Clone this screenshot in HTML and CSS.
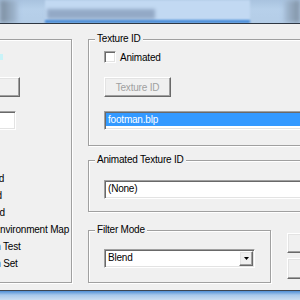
FILE: index.html
```html
<!DOCTYPE html>
<html lang="en">
<head>
    <meta charset="UTF-8">
    <title>Layer</title>
    <link rel="stylesheet" href="styles.css">
</head>
<body>
    <div class="titlebar">
        <div class="glass-left"></div>
        <div class="glass-title">
            <div class="glass-caption"></div>
            <div class="glass-strip"></div>
        </div>
        <div class="glass-right"></div>
    </div>

    <div class="client">
        <!-- left group, mostly scrolled off the left edge -->
        <fieldset class="group group-alpha">
            <legend>Alpha</legend>
            <div class="group-body">
                <div class="check-row">
                    <span class="check"></span>
                    <span class="focus-mark"></span>
                </div>
                <button class="btn" type="button">Alpha</button>
                <div class="edit edit-short">1.000</div>
                <div class="flags">
                    <div class="flag"><span class="check"></span><label>Unshaded</label></div>
                    <div class="flag"><span class="check"></span><label>Unfogged</label></div>
                    <div class="flag"><span class="check"></span><label>Two Sided</label></div>
                    <div class="flag"><span class="check"></span><label>Sphere Environment Map</label></div>
                    <div class="flag"><span class="check"></span><label>No Depth Test</label></div>
                    <div class="flag"><span class="check"></span><label>No Depth Set</label></div>
                </div>
            </div>
        </fieldset>

        <div class="mid">
            <fieldset class="group group-texture">
                <legend>Texture ID</legend>
                <div class="group-body">
                    <div class="check-row">
                        <span class="check"></span>
                        <label>Animated</label>
                    </div>
                    <button class="btn" type="button" disabled>Texture ID</button>
                    <div class="edit edit-long"><span class="selected">footman.blp</span></div>
                </div>
            </fieldset>

            <fieldset class="group group-anim">
                <legend>Animated Texture ID</legend>
                <div class="group-body">
                    <div class="edit edit-long"><span class="plain">(None)</span></div>
                </div>
            </fieldset>

            <div class="filter-row">
                <fieldset class="group group-filter">
                    <legend>Filter Mode</legend>
                    <div class="group-body">
                        <div class="edit combo">
                            <span class="plain">Blend</span>
                            <span class="combo-btn">
                                <svg width="5" height="3" viewBox="0 0 5 3"><polygon points="0,0 5,0 2.5,3" fill="#000"/></svg>
                            </span>
                        </div>
                    </div>
                </fieldset>
                <div class="side-btns">
                    <button class="btn" type="button">OK</button>
                    <button class="btn" type="button">Cancel</button>
                </div>
            </div>
        </div>
    </div>

    <div class="taskbar"></div>
</body>
</html>
```

FILE: styles.css
```css
* {
    box-sizing: border-box;
}
body {
    margin: 0;
    width: 300px;
    height: 300px;
    overflow: hidden;
    background-color: #f0f0f0;
    font-family: "Liberation Sans", Arial, sans-serif;
    font-size: 10px;
    letter-spacing: -0.2px;
    color: #000;
}

/* blurred aero title bar */
.titlebar {
    display: flex;
    height: 24px;
    border-bottom: 1px solid #2e3742;
    background: linear-gradient(#a9c3df, #b7d0ea 40%, #b4cde7);
    overflow: hidden;
}
.glass-left {
    width: 18px;
    background: linear-gradient(to right, #7a8b9d, #a6bed8);
    filter: blur(2px);
}
.glass-title {
    display: flex;
    flex-direction: column;
    margin-left: 27px;
    width: 205px;
    background-color: #c2d9f2;
    filter: blur(1px);
}
.glass-caption {
    margin-top: 9px;
    margin-left: 2px;
    width: 108px;
    height: 10px;
    background-color: #93a9c6;
    filter: blur(1.5px);
}
.glass-strip {
    margin-top: auto;
    height: 3px;
    background-color: #3f87d8;
}
.glass-right {
    margin-left: auto;
    width: 16px;
    background: linear-gradient(to right, #a6bed8, #7f90a2);
    filter: blur(2px);
}

.client {
    display: flex;
    align-items: flex-start;
    height: 266px;
}

/* etched group boxes */
.group {
    margin: 0;
    padding: 0;
    border: 1px solid #a0a0a0;
    box-shadow: 1px 1px 0 #fff, inset 1px 1px 0 #fff;
    min-width: 0;
}
.group legend {
    margin-left: 6px;
    padding: 0 2px;
    height: 12px;
    line-height: 12px;
    background-color: #f0f0f0;
}
.group-body {
    padding: 6px 0 0 15px;
}

.group-alpha {
    flex: none;
    margin-left: -63px;
    margin-top: 9px;
    width: 135px;
    height: 250px;
}
.mid {
    flex: none;
    display: flex;
    flex-direction: column;
    margin-left: 16px;
    width: 290px;
}
.group-texture {
    margin-top: 9px;
    height: 113px;
}
.group-anim {
    margin-top: 8px;
    height: 58px;
}
.group-anim .group-body,
.group-filter .group-body {
    padding-top: 0;
}
.filter-row {
    display: flex;
    align-items: flex-start;
    margin-top: 12px;
}
.group-filter {
    flex: none;
    width: 183px;
    height: 59px;
}
.side-btns {
    display: flex;
    flex-direction: column;
    gap: 5px;
    margin-left: 16px;
    margin-top: 9px;
}
.side-btns .btn {
    margin-top: 0;
    width: 75px;
}
.side-btns .btn + .btn {
    height: 21px;
}

/* controls */
.check-row {
    display: flex;
    align-items: center;
    height: 12px;
}
.check-row label {
    margin-left: 4px;
}
.check {
    flex: none;
    width: 12px;
    height: 12px;
    background-color: #fff;
    border: 1px solid;
    border-color: #a0a0a0 #fff #fff #a0a0a0;
    box-shadow: inset 1px 1px 0 #696969, inset -1px -1px 0 #e3e3e3;
}
.focus-mark {
    margin-left: 35px;
    width: 3px;
    height: 6px;
    background-color: #c9f3f8;
}
.btn {
    display: block;
    margin-top: 14px;
    padding: 0;
    width: 67px;
    height: 20px;
    font: inherit;
    letter-spacing: inherit;
    color: #000;
    background-color: #f0f0f0;
    border: 1px solid;
    border-color: #fff #696969 #696969 #fff;
    box-shadow: inset -1px -1px 0 #a0a0a0, inset 1px 1px 0 #e3e3e3;
    border-radius: 0;
}
.btn:disabled {
    color: #a0a0a0;
}
.edit {
    margin-top: 14px;
    padding: 1px;
    height: 19px;
    line-height: 13px;
    background-color: #fff;
    border: 1px solid;
    border-color: #a0a0a0 #fff #fff #a0a0a0;
    box-shadow: inset 1px 1px 0 #696969, inset -1px -1px 0 #e3e3e3;
    overflow: hidden;
    white-space: nowrap;
}
.edit-short {
    width: 63px;
    padding-left: 3px;
    line-height: 15px;
}
.edit-long {
    width: 260px;
}
.selected {
    display: block;
    height: 13px;
    padding-left: 2px;
    background-color: #3399ff;
    color: #fff;
}
.plain {
    display: block;
    padding-left: 2px;
    line-height: 14px;
}
.combo {
    display: flex;
    margin-top: 13px;
    width: 151px;
}
.combo-btn {
    display: flex;
    align-items: center;
    justify-content: center;
    margin-left: auto;
    width: 14px;
    height: 15px;
    background-color: #f0f0f0;
    border: 1px solid;
    border-color: #fff #696969 #696969 #fff;
    box-shadow: inset -1px -1px 0 #a0a0a0, inset 1px 1px 0 #e3e3e3;
}
.combo-btn svg {
    display: block;
}

.flags {
    margin-top: 40px;
    margin-left: -10px;
}
.flag {
    display: flex;
    align-items: center;
    height: 17px;
    white-space: nowrap;
}
.flag label {
    margin-left: 5px;
}

.taskbar {
    height: 10px;
    border-top: 1px solid #3c4652;
    background: linear-gradient(#4f8fd6, #a8c8ea 45%, #c8dcf0);
}
```
